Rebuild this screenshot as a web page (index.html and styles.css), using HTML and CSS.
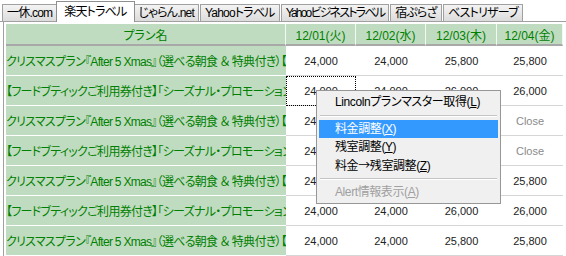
FILE: index.html
```html
<!DOCTYPE html>
<html>

<head>
  <meta charset="utf-8" />
  <link rel="stylesheet" href="styles.css">
</head>

<body>
  <div class="tabs">
    <div class="tab">一休.com</div>
    <div class="tab tab-active">楽天トラベル</div>
    <div class="tab">じゃらん.net</div>
    <div class="tab">Yahooトラベル</div>
    <div class="tab tab-long">Yahooビジネストラベル</div>
    <div class="tab">宿ぷらざ</div>
    <div class="tab">ベストリザーブ</div>
  </div>

  <div class="panel">
    <table class="grid">
      <colgroup>
        <col class="col-plan">
        <col class="col-day">
        <col class="col-day">
        <col class="col-day3">
        <col class="col-day4">
      </colgroup>
      <thead>
        <tr>
          <th>プラン名</th>
          <th>12/01(火)</th>
          <th>12/02(水)</th>
          <th>12/03(木)</th>
          <th>12/04(金)</th>
        </tr>
      </thead>
      <tbody>
        <tr>
          <td class="plan">クリスマスプラン『After 5 Xmas』（選べる朝食 ＆ 特典付き）【リビングスイート】</td>
          <td class="num">24,000</td>
          <td class="num">24,000</td>
          <td class="num">25,800</td>
          <td class="num">25,800</td>
        </tr>
        <tr>
          <td class="plan">【フードブティックご利用券付き】「シーズナル・プロモーション」スタンダード</td>
          <td class="num focus">24,000</td>
          <td class="num">24,000</td>
          <td class="num">26,000</td>
          <td class="num">26,000</td>
        </tr>
        <tr>
          <td class="plan">クリスマスプラン『After 5 Xmas』（選べる朝食 ＆ 特典付き）【リビングスイート】</td>
          <td class="num">24,000</td>
          <td class="num">24,000</td>
          <td class="num">25,800</td>
          <td class="num closed">Close</td>
        </tr>
        <tr>
          <td class="plan">【フードブティックご利用券付き】「シーズナル・プロモーション」スタンダード</td>
          <td class="num">24,000</td>
          <td class="num">24,000</td>
          <td class="num">26,000</td>
          <td class="num closed">Close</td>
        </tr>
        <tr>
          <td class="plan">クリスマスプラン『After 5 Xmas』（選べる朝食 ＆ 特典付き）【リビングスイート】</td>
          <td class="num">24,000</td>
          <td class="num">24,000</td>
          <td class="num">25,800</td>
          <td class="num">25,800</td>
        </tr>
        <tr>
          <td class="plan">【フードブティックご利用券付き】「シーズナル・プロモーション」スタンダード</td>
          <td class="num">24,000</td>
          <td class="num">24,000</td>
          <td class="num">26,000</td>
          <td class="num">26,000</td>
        </tr>
        <tr>
          <td class="plan">クリスマスプラン『After 5 Xmas』（選べる朝食 ＆ 特典付き）【リビングスイート】</td>
          <td class="num">24,000</td>
          <td class="num">24,000</td>
          <td class="num">25,800</td>
          <td class="num">25,800</td>
        </tr>
      </tbody>
    </table>
  </div>

  <!-- right click menu -->
  <ul class="menu">
    <li class="menu-item">Lincolnプランマスター取得(<u>L</u>)</li>
    <li class="menu-sep"></li>
    <li class="menu-item is-hot">料金調整(<u>X</u>)</li>
    <li class="menu-item">残室調整(<u>Y</u>)</li>
    <li class="menu-item">料金<span class="arrow">→</span>残室調整(<u>Z</u>)</li>
    <li class="menu-sep"></li>
    <li class="menu-item is-off">Alert情報表示(<u>A</u>)</li>
  </ul>
</body>

</html>
```

FILE: styles.css
```css
/* page */
body {
  margin: 0;
  background: #ffffff;
  font-family: "Liberation Sans", "Noto Sans CJK JP", sans-serif;
  font-size: 12px;
  font-feature-settings: "palt";
  color: #000000;
  overflow: hidden;
}

/* tab strip */
.tabs {
  display: flex;
  align-items: flex-end;
  height: 20px;
  padding: 1px 0 0 2px;
  border-bottom: 1px solid #a0a0a0;
}

.tab {
  height: 16px;
  line-height: 17px;
  padding: 0 4px;
  margin-right: 1px;
  border: 1px solid #a0a0a0;
  border-bottom: 0;
  background: linear-gradient(#f4f4f4, #e8e8e8 50%, #dcdcdc);
  letter-spacing: -0.8px;
  white-space: nowrap;
}

.tab-long {
  letter-spacing: -1.8px;
}

.tab-active {
  position: relative;
  z-index: 1;
  height: 20px;
  line-height: 21px;
  padding: 0 7px;
  margin: 0 -1px -1px -2px;
  border-color: #8e8f8f;
  background: #ffffff;
}

/* grid */
.panel {
  margin-left: 3px;
  padding: 2px 0 0 2px;
  border-left: 1px solid #a0a0a0;
}

.grid {
  table-layout: fixed;
  border-collapse: separate;
  border-spacing: 0;
  width: 557px;
}

.col-plan {
  width: 280px;
}

.col-day {
  width: 70px;
}

.col-day3 {
  width: 71px;
}

.col-day4 {
  width: 66px;
}

.grid th {
  height: 20px;
  padding: 0;
  background: #c0dcc0;
  color: #008000;
  font-weight: normal;
  border-right: 1px solid #f4f8f4;
  border-bottom: 2px solid #a8a8a8;
}

.grid td {
  height: 29px;
  padding: 0;
}

.plan {
  padding-left: 1px;
  background: #c0dcc0;
  color: #008000;
  border-bottom: 1px solid #ffffff;
  letter-spacing: -0.7px;
  white-space: nowrap;
  overflow: hidden;
}

.num {
  text-align: center;
  font-size: 11px;
  color: #222222;
  border-bottom: 1px solid #d6d6d6;
}

.closed {
  color: #8a8a8a;
}

.focus {
  outline: 1px dotted #000000;
  outline-offset: -1px;
}

/* context menu */
.menu {
  position: absolute;
  left: 316px;
  top: 90px;
  width: 179px;
  margin: 0;
  padding: 2px;
  list-style: none;
  background: #f0f0f0;
  border: 1px solid #979797;
}

.menu-item {
  height: 18px;
  line-height: 18px;
  padding-left: 16px;
  letter-spacing: -0.4px;
  white-space: nowrap;
}

.menu-item.is-hot {
  background: #3399ff;
  color: #ffffff;
}

.menu-item.is-off {
  color: #a0a0a0;
}

.arrow {
  font-family: "Noto Sans CJK JP", sans-serif;
  font-feature-settings: normal;
}

.menu-sep {
  height: 0;
  margin: 4px 1px 3px;
  border-top: 1px solid #c4c4c4;
  border-bottom: 1px solid #ffffff;
}
```
